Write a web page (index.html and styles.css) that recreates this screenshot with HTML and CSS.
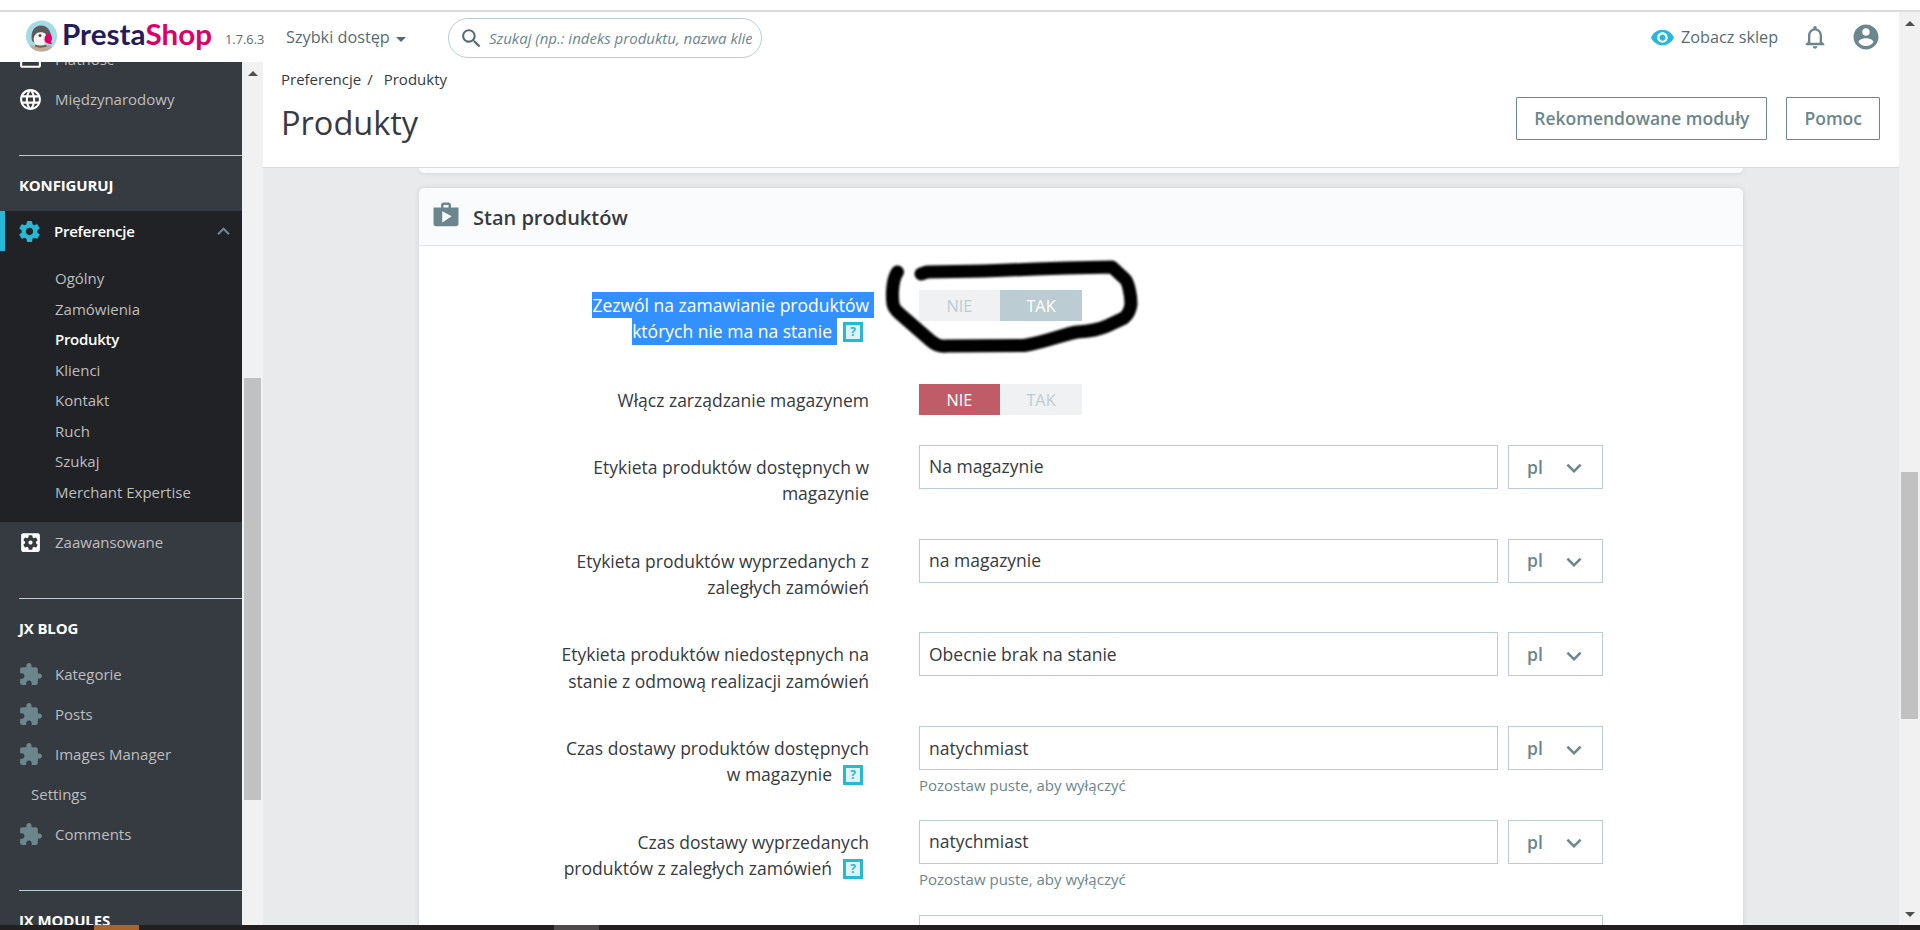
FILE: index.html
```html
<!DOCTYPE html>
<html lang="pl">
<head>
  <meta charset="utf-8">
  <title>Produkty • PrestaShop</title>
  <link rel="stylesheet" href="styles.css">
</head>
<body>
  <!-- Shared icons -->
  <svg class="sprite">
    <symbol id="extension" viewBox="0 0 24 24"><path d="M20.5 11H19V7c0-1.1-.9-2-2-2h-4V3.5C13 2.12 11.88 1 10.5 1S8 2.12 8 3.5V5H4c-1.1 0-1.99.9-1.99 2v3.8H3.5c1.49 0 2.7 1.21 2.7 2.7s-1.21 2.7-2.7 2.7H2V20c0 1.1.9 2 2 2h3.8v-1.5c0-1.49 1.21-2.7 2.7-2.7 1.49 0 2.7 1.21 2.7 2.7V22H17c1.1 0 2-.9 2-2v-4h1.5c1.38 0 2.5-1.12 2.5-2.5S21.88 11 20.5 11z"/></symbol>
    <symbol id="arrow-down" viewBox="0 0 24 24"><path d="M7.41 7.84L12 12.42l4.59-4.58L18 9.25l-6 6-6-6z"/></symbol>
  </svg>

  <div class="top-strip"></div>

  <div class="window">
    <div class="app">
      <header class="header">
        <a class="logo">
          <svg width="192" height="34" viewBox="0 0 192 34">
            <clipPath id="disc"><circle cx="15.500" cy="16" r="15.500"/></clipPath>
            <g clip-path="url(#disc)">
              <rect width="31" height="32" fill="#a4dbe8"/>
              <path d="M6 21C4 12 8 5.500 15 5.500c5 0 8.500 3 9.500 8L23 20 12 25z" fill="#5b5b5e"/>
              <path d="M8 17c1-4 5-5.500 9-4.500 3 .8 4 3 3 6l-2 6.500h-8c-2-2-3-5-2-8z" fill="#f7f3f1"/>
              <path d="M4 25c5 1.500 14 1.500 20-.5l3 4-10 4.500H6z" fill="#c3ab97"/>
              <path d="M9 24.500c3 1.500 8 1.500 11 0l1 2c-4 1.500-9 1.500-12 0z" fill="#6e6461"/>
              <path d="M18.500 19c0-3 3-6.500 5.500-5.500 2.500 2 2.500 6 1 8l1 2.500c-3 0-5-.5-6.500-2-1-.8-1.200-2-1-3z" fill="#df0067"/>
              <circle cx="14" cy="15.500" r="1.500" fill="#4b4b4e"/>
            </g>
            <text class="logo-text" x="36" y="25" textLength="150" lengthAdjust="spacingAndGlyphs"><tspan fill="#251b5b">Presta</tspan><tspan fill="#df0067">Shop</tspan></text>
          </svg>
        </a>
        <span class="version">1.7.6.3</span>
        <span class="quick-access">Szybki dostęp <i class="caret"></i></span>
        <div class="search">
          <svg class="icon" viewBox="0 0 24 24"><path d="M15.5 14h-.79l-.28-.27C15.41 12.59 16 11.11 16 9.5 16 5.91 13.09 3 9.5 3S3 5.91 3 9.5 5.91 16 9.500 16c1.610 0 3.090-.59 4.230-1.570l.27.28v.79l5 4.990L20.490 19l-4.990-5zm-6 0C7.010 14 5 11.990 5 9.500S7.010 5 9.500 5 14 7.010 14 9.500 11.990 14 9.500 14z"/></svg>
          <span class="search-text">Szukaj (np.: indeks produktu, nazwa klienta...)</span>
        </div>
        <div class="header-right">
          <svg class="icon eye" viewBox="0 0 24 24"><path d="M12 4.500C7 4.500 2.730 7.610 1 12c1.730 4.390 6 7.500 11 7.500s9.270-3.110 11-7.500c-1.730-4.390-6-7.500-11-7.500zM12 17c-2.760 0-5-2.240-5-5s2.240-5 5-5 5 2.240 5 5-2.240 5-5 5zm0-8c-1.660 0-3 1.340-3 3s1.340 3 3 3 3-1.340 3-3-1.340-3-3-3z"/></svg>
          <span class="shop-link">Zobacz sklep</span>
          <svg class="icon bell" viewBox="0 0 24 24"><path d="M12 22c1.1 0 2-.9 2-2h-4c0 1.1.9 2 2 2zm6-6v-5c0-3.070-1.630-5.640-4.500-6.320V4c0-.83-.67-1.500-1.500-1.500s-1.500.67-1.500 1.500v.68C7.640 5.360 6 7.920 6 11v5l-2 2v1h16v-1l-2-2zm-2 1H8v-6c0-2.480 1.510-4.500 4-4.500s4 2.020 4 4.500v6z"/></svg>
          <svg class="icon account" viewBox="0 0 24 24"><path d="M12 2C6.480 2 2 6.480 2 12s4.480 10 10 10 10-4.480 10-10S17.520 2 12 2zm0 3c1.660 0 3 1.340 3 3s-1.340 3-3 3-3-1.340-3-3 1.340-3 3-3zm0 14.200c-2.500 0-4.710-1.280-6-3.220.03-1.990 4-3.080 6-3.080 1.990 0 5.970 1.090 6 3.080-1.290 1.940-3.500 3.220-6 3.220z"/></svg>
        </div>
      </header>

      <div class="columns">
        <nav class="sidebar">
          <a class="item first">
            <svg class="icon" viewBox="0 0 24 24"><path d="M20 4H4c-1.110 0-1.990.89-1.990 2L2 18c0 1.110.89 2 2 2h16c1.110 0 2-.89 2-2V6c0-1.110-.89-2-2-2zm0 14H4v-6h16v6zm0-10H4V6h16v2z"/></svg>
            Płatność
          </a>
          <a class="item">
            <svg class="icon" viewBox="0 0 24 24"><path d="M11.990 2C6.470 2 2 6.480 2 12s4.470 10 9.990 10C17.520 22 22 17.520 22 12S17.520 2 11.990 2zm6.930 6h-2.950c-.32-1.250-.78-2.450-1.380-3.560 1.840.63 3.370 1.910 4.330 3.560zM12 4.040c.83 1.200 1.480 2.530 1.910 3.960h-3.820c.43-1.430 1.080-2.760 1.910-3.960zM4.260 14C4.100 13.360 4 12.690 4 12s.1-1.360.26-2h3.380c-.08.66-.14 1.320-.14 2 0 .68.06 1.340.14 2H4.260zm.82 2h2.950c.32 1.250.78 2.450 1.380 3.560-1.840-.63-3.370-1.900-4.330-3.560zm2.950-8H5.080c.96-1.660 2.490-2.930 4.330-3.560C8.810 5.550 8.350 6.750 8.030 8zM12 19.960c-.83-1.200-1.480-2.530-1.910-3.960h3.820c-.43 1.430-1.080 2.760-1.910 3.960zM14.340 14H9.660c-.09-.66-.16-1.320-.16-2 0-.68.07-1.350.16-2h4.680c.09.65.16 1.320.16 2 0 .68-.07 1.340-.16 2zm.25 5.560c.6-1.110 1.060-2.310 1.380-3.560h2.950c-.96 1.650-2.490 2.930-4.330 3.560zM16.360 14c.08-.66.14-1.320.14-2 0-.68-.06-1.340-.14-2h3.380c.16.64.26 1.310.26 2s-.1 1.360-.26 2h-3.380z"/></svg>
            Międzynarodowy
          </a>
          <div class="category">KONFIGURUJ</div>
          <div class="group">
            <a class="item active">
              <svg class="icon" viewBox="0 0 24 24"><path d="M19.430 12.980c.04-.32.07-.64.07-.98s-.03-.66-.07-.98l2.110-1.650c.19-.15.24-.42.12-.64l-2-3.460c-.12-.22-.39-.3-.61-.22l-2.490 1c-.52-.4-1.080-.73-1.690-.98l-.38-2.650C14.460 2.180 14.250 2 14 2h-4c-.25 0-.46.18-.49.42l-.38 2.650c-.61.25-1.170.59-1.690.98l-2.490-1c-.23-.09-.49 0-.61.22l-2 3.460c-.13.22-.07.49.12.64l2.110 1.650c-.04.32-.07.65-.07.98s.03.66.07.98l-2.110 1.650c-.19.15-.24.42-.12.64l2 3.460c.12.22.39.3.61.22l2.490-1c.52.4 1.080.73 1.690.98l.38 2.650c.03.24.24.42.49.42h4c.25 0 .46-.18.49-.42l.38-2.650c.61-.25 1.170-.59 1.690-.98l2.490 1c.23.09.49 0 .61-.22l2-3.460c.12-.22.07-.49-.12-.64l-2.110-1.650zM12 15.500c-1.930 0-3.500-1.570-3.500-3.500s1.570-3.500 3.500-3.500 3.500 1.570 3.500 3.500-1.570 3.500-3.500 3.500z"/></svg>
              Preferencje
              <svg class="icon chevron" viewBox="0 0 24 24"><path d="M7.410 15.410L12 10.830l4.590 4.580L18 14l-6-6-6 6z"/></svg>
            </a>
            <ul class="submenu">
              <li>Ogólny</li>
              <li>Zamówienia</li>
              <li class="current">Produkty</li>
              <li>Klienci</li>
              <li>Kontakt</li>
              <li>Ruch</li>
              <li>Szukaj</li>
              <li>Merchant Expertise</li>
            </ul>
          </div>
          <a class="item">
            <svg class="icon" viewBox="0 0 24 24"><path d="M12 10c-1.1 0-2 .9-2 2s.9 2 2 2 2-.9 2-2-.9-2-2-2zm7-7H5c-1.110 0-2 .9-2 2v14c0 1.100.89 2 2 2h14c1.110 0 2-.9 2-2V5c0-1.100-.89-2-2-2zm-1.750 9c0 .23-.02.46-.05.68l1.480 1.160c.13.11.17.3.08.45l-1.400 2.420c-.09.15-.27.21-.43.15l-1.740-.7c-.36.28-.76.51-1.180.69l-.26 1.850c-.03.17-.18.3-.35.3h-2.800c-.17 0-.32-.13-.35-.29l-.26-1.850c-.43-.18-.82-.41-1.180-.69l-1.740.7c-.16.06-.34 0-.43-.15l-1.400-2.420c-.09-.15-.05-.34.08-.45l1.480-1.160c-.03-.23-.05-.46-.05-.69 0-.23.02-.46.05-.68l-1.480-1.160c-.13-.11-.17-.3-.08-.45l1.400-2.420c.09-.15.27-.21.43-.15l1.740.7c.36-.28.76-.51 1.180-.69l.26-1.850c.03-.17.18-.3.35-.3h2.800c.17 0 .32.13.35.29l.26 1.850c.43.18.82.41 1.180.69l1.740-.7c.16-.06.34 0 .43.15l1.400 2.420c.09.15.05.34-.08.45l-1.480 1.160c.03.23.05.46.05.69z"/></svg>
            Zaawansowane
          </a>
          <div class="category">JX BLOG</div>
          <a class="item"><svg class="icon muted"><use href="#extension"/></svg>Kategorie</a>
          <a class="item"><svg class="icon muted"><use href="#extension"/></svg>Posts</a>
          <a class="item"><svg class="icon muted"><use href="#extension"/></svg>Images Manager</a>
          <a class="item no-icon">Settings</a>
          <a class="item"><svg class="icon muted"><use href="#extension"/></svg>Comments</a>
          <div class="category">JX MODULES</div>
        </nav>
        <div class="scrollbar side-scroll">
          <i class="up"></i>
          <i class="thumb"></i>
        </div>

        <main class="main">
          <div class="page-head">
            <div>
              <div class="breadcrumb"><span>Preferencje</span><span class="slash">/</span><span>Produkty</span></div>
              <h1>Produkty</h1>
            </div>
            <div class="toolbar">
              <a class="btn">Rekomendowane moduły</a>
              <a class="btn">Pomoc</a>
            </div>
          </div>

          <div class="content">
            <div class="card previous"></div>
            <div class="card stock">
              <h3 class="card-title">
                <svg class="icon" viewBox="0 0 24 24"><path d="M16 6V4c0-1.110-.89-2-2-2h-4c-1.110 0-2 .89-2 2v2H2v13c0 1.110.89 2 2 2h16c1.110 0 2-.89 2-2V6h-6zm-6-2h4v2h-4V4zM9 18V9l7.500 4L9 18z"/></svg>
                Stan produktów
              </h3>
              <div class="card-body">
                <div class="form-row highlighted">
                  <div class="label"><span class="selected">Zezwól na zamawianie produktów</span><br><span class="selected">których nie ma na stanie</span><span class="help">?</span></div>
                  <div class="switch"><span>NIE</span><span class="on">TAK</span></div>
                  <svg class="scribble" width="270" height="110" viewBox="0 0 270 110">
                    <path d="M37.500 32C33 38 31.500 52 33 64Q34 69 40 74L71 101Q78 107 86 106L164 105.500C186 102 201 95 217 92Q236 91 247 86L264 78Q270 73 271 64C271 54 268 42 265 39L252 27L206 28L176 29L124 31L67 32L61 34"/>
                  </svg>
                </div>
                <div class="form-row short">
                  <div class="label">Włącz zarządzanie magazynem</div>
                  <div class="switch"><span class="off">NIE</span><span>TAK</span></div>
                </div>
                <div class="form-row">
                  <div class="label">Etykieta produktów dostępnych w magazynie</div>
                  <div class="field"><input type="text" value="Na magazynie"></div>
                  <div class="lang">pl <svg class="icon"><use href="#arrow-down"/></svg></div>
                </div>
                <div class="form-row">
                  <div class="label">Etykieta produktów wyprzedanych z zaległych zamówień</div>
                  <div class="field"><input type="text" value="na magazynie"></div>
                  <div class="lang">pl <svg class="icon"><use href="#arrow-down"/></svg></div>
                </div>
                <div class="form-row">
                  <div class="label">Etykieta produktów niedostępnych na stanie z odmową realizacji zamówień</div>
                  <div class="field"><input type="text" value="Obecnie brak na stanie"></div>
                  <div class="lang">pl <svg class="icon"><use href="#arrow-down"/></svg></div>
                </div>
                <div class="form-row">
                  <div class="label">Czas dostawy produktów dostępnych w&nbsp;magazynie<span class="help">?</span></div>
                  <div class="field"><input type="text" value="natychmiast"><small>Pozostaw puste, aby wyłączyć</small></div>
                  <div class="lang">pl <svg class="icon"><use href="#arrow-down"/></svg></div>
                </div>
                <div class="form-row">
                  <div class="label">Czas dostawy wyprzedanych produktów z zaległych zamówień<span class="help">?</span></div>
                  <div class="field"><input type="text" value="natychmiast"><small>Pozostaw puste, aby wyłączyć</small></div>
                  <div class="lang">pl <svg class="icon"><use href="#arrow-down"/></svg></div>
                </div>
                <div class="form-row last">
                  <div class="label"></div>
                  <div class="field wide"><input type="text"></div>
                </div>
              </div>
            </div>
          </div>
        </main>
      </div>
    </div>
    <div class="scrollbar page-scroll">
      <i class="up"></i>
      <i class="thumb"></i>
      <i class="down"></i>
    </div>
  </div>

  <div class="taskbar"><i class="task orange"></i><i class="task gray"></i></div>
</body>
</html>
```
FILE: styles.css
```css
* {
  box-sizing: border-box;
}

body {
  margin: 0;
  height: 930px;
  display: flex;
  flex-direction: column;
  overflow: hidden;
  background: #fff;
  color: #363a41;
  font-family: "Open Sans", sans-serif;
  font-size: 17.5px;
  line-height: 26.25px;
}

.sprite {
  display: none;
}

.icon {
  width: 25px;
  height: 25px;
  flex: none;
  fill: currentColor;
}

.top-strip {
  height: 12px;
  border-bottom: 2px solid #dadada;
}

.window {
  height: 913px;
  display: flex;
}

.app {
  width: 1899px;
  display: flex;
  flex-direction: column;
}

/* Header */
.header {
  height: 50px;
  flex: none;
  display: flex;
  align-items: center;
  color: #576c72;
}

.logo {
  width: 199px;
  height: 34px;
  margin-left: 26px;
}

.logo-text {
  font-family: Lato, sans-serif;
  font-weight: 700;
  font-size: 28px;
}

.version {
  width: 61px;
  padding-top: 4px;
  font-size: 12.8px;
}

.quick-access {
  width: 162px;
  font-size: 16.25px;
  display: flex;
  align-items: center;
}

.caret {
  margin: 4px 0 0 6px;
  border: 5px solid transparent;
  border-top: 5px solid #576c72;
  border-bottom: 0;
}

.search {
  width: 314px;
  height: 40px;
  margin-top: 2px;
  padding: 0 9px 0 10px;
  display: flex;
  align-items: center;
  border: 1px solid #bbcdd2;
  border-radius: 20px;
}

.search-text {
  margin-left: 5px;
  width: 264px;
  overflow: hidden;
  white-space: nowrap;
  font-size: 15px;
  font-style: italic;
  color: #6c868e;
}

.header-right {
  margin-left: auto;
  padding-right: 18px;
  display: flex;
  align-items: center;
}

.eye {
  color: #25b9d7;
}

.shop-link {
  width: 126px;
  padding-left: 6px;
  font-size: 16.25px;
  white-space: nowrap;
}

.bell {
  width: 28px;
  height: 28px;
  margin-right: 22px;
  color: #6c868e;
}

.account {
  width: 30px;
  height: 30px;
  color: #6c868e;
}

.columns {
  flex: 1;
  min-height: 0;
  display: flex;
}

/* Sidebar */
.sidebar {
  width: 242px;
  overflow: hidden;
  background: #363a41;
  color: #bebebe;
  font-size: 15px;
}

.item {
  height: 40px;
  padding-left: 18px;
  display: flex;
  align-items: center;
}

.item .icon {
  margin-right: 12px;
  color: #fff;
}

.item .icon.muted {
  color: #6c868e;
}

.item.first {
  margin-top: -23px;
}

.item.no-icon {
  padding-left: 31px;
}

.category {
  height: 56px;
  margin: 36px 0 0 19px;
  padding-top: 16px;
  border-top: 1px solid #bbcdd2;
  color: #fff;
  font-weight: 700;
  letter-spacing: -0.15px;
}

.group {
  height: 311px;
  background: #202226;
}

.item.active {
  padding-left: 12px;
  border-left: 5px solid #25b9d7;
  color: #fff;
  font-weight: 600;
  letter-spacing: -0.25px;
}

.item.active .icon {
  color: #25b9d7;
}

.item.active .icon.chevron {
  margin-left: auto;
  margin-right: 6px;
  color: #6c868e;
}

.submenu {
  margin: 0;
  padding: 12px 0 0 55px;
  list-style: none;
  line-height: 30.5px;
}

.submenu .current {
  color: #fff;
  font-weight: 600;
  letter-spacing: -0.3px;
}

/* Scrollbars */
.scrollbar {
  width: 21px;
  flex: none;
  display: flex;
  flex-direction: column;
  align-items: center;
  background: #f1f1f1;
}

.scrollbar .up {
  border: 5px solid transparent;
  border-bottom: 5px solid #505050;
  border-top: 0;
}

.scrollbar .down {
  border: 5px solid transparent;
  border-top: 5px solid #505050;
  border-bottom: 0;
  margin-top: 193px;
}

.scrollbar .thumb {
  width: 17px;
  background: #c1c1c1;
}

.side-scroll .up {
  margin-top: 9px;
}

.side-scroll .thumb {
  height: 422px;
  margin-top: 302px;
}

.page-scroll .up {
  margin-top: 9px;
}

.page-scroll .thumb {
  height: 247px;
  margin-top: 446px;
}

/* Page head */
.main {
  flex: 1;
  display: flex;
  flex-direction: column;
  min-width: 0;
}

.page-head {
  height: 106px;
  flex: none;
  padding: 4px 19px 0;
  display: flex;
  justify-content: space-between;
  background: #fff;
  border-bottom: 1px solid #d6dadc;
}

.breadcrumb {
  margin-left: -1px;
  font-size: 15px;
}

.breadcrumb .slash {
  margin: 0 11px 0 6px;
}

h1 {
  margin: 11px 0 0 -1px;
  font-size: 32.5px;
  line-height: 40px;
  font-weight: 400;
}

.toolbar {
  display: flex;
  gap: 19px;
  padding-top: 31px;
}

.btn {
  height: 43px;
  padding: 0 17px;
  line-height: 41px;
  border: 1px solid #6c868e;
  border-radius: 1px;
  color: #6c868e;
  font-weight: 600;
}

/* Cards */
.content {
  flex: 1;
  overflow: hidden;
  padding-left: 156px;
  background: #e9eaec;
}

.card {
  width: 1324px;
  border-radius: 6px;
  background: #fff;
  box-shadow: 0 0 5px rgba(54, 58, 65, 0.15);
}

.previous {
  height: 5px;
  border-radius: 0 0 6px 6px;
  margin-bottom: 15px;
  background: #fafbfc;
}

.stock {
  height: 760px;
}

.card-title {
  height: 58px;
  margin: 0;
  padding: 3px 0 0 12px;
  display: flex;
  align-items: center;
  border-bottom: 1px solid #dfe4e8;
  border-radius: 6px 6px 0 0;
  background: #fafbfc;
  font-size: 20px;
  font-weight: 600;
}

.card-title .icon {
  width: 30px;
  height: 30px;
  margin: -7px 12px 0 0;
  color: #6c868e;
}

.card-body {
  padding-top: 38px;
}

.form-row {
  position: relative;
  height: 93.75px;
  display: flex;
  align-items: flex-start;
}

.form-row.short {
  height: 67px;
}

.form-row.last {
  padding-top: 1px;
}

.label {
  width: 314px;
  margin: 9px 50px 0 136px;
  text-align: right;
}

.highlighted .label {
  margin-top: 8px;
}

.selected {
  display: inline-block;
  margin-right: -5px;
  padding-right: 5px;
  background: #3390ff;
  color: #fff;
}

.help {
  display: inline-block;
  width: 20px;
  height: 20px;
  margin: -2px 6px -2px 11px;
  border: 3px solid #25b9d7;
  background: #dcf4f9;
  color: #25b9d7;
  font-size: 12px;
  font-weight: 700;
  line-height: 14px;
  text-align: center;
  vertical-align: 2px;
}

/* Switch */
.switch {
  width: 163px;
  height: 31px;
  margin-top: 6px;
  display: flex;
  background: #eff1f3;
  color: #bbcdd2;
  font-size: 16.25px;
  line-height: 32px;
  text-align: center;
}

.switch span {
  width: 81px;
}

.switch span + span {
  width: 82px;
}

.switch .on {
  background: #bbcdd2;
  color: #fff;
}

.switch .off {
  background: #c05c67;
  color: #fff;
}

/* Hand-drawn loop around the first switch */
.scribble {
  position: absolute;
  left: 441px;
  top: -44px;
  overflow: visible;
  fill: none;
  stroke: #000;
  stroke-width: 13px;
  stroke-linecap: round;
  stroke-linejoin: round;
  filter: blur(0.8px);
}

/* Inputs */
.field {
  width: 579px;
  margin-right: 10px;
}

.field.wide {
  width: 684px;
}

.field input {
  display: block;
  width: 100%;
  height: 44px;
  padding: 0 9px 1px;
  border: 1px solid #bbcdd2;
  background: #fff;
  color: #363a41;
  font: inherit;
}

.field small {
  display: block;
  margin-top: 2px;
  font-size: 15px;
  color: #6c868e;
}

.lang {
  width: 95px;
  height: 44px;
  padding: 0 13px 0 18px;
  display: flex;
  align-items: center;
  justify-content: space-between;
  border: 1px solid #bbcdd2;
  color: #6c868e;
  font-weight: 600;
}

.lang .icon {
  width: 30px;
  height: 30px;
  margin-top: 5px;
}

/* Taskbar */
.taskbar {
  height: 5px;
  display: flex;
  background: #231f20;
}

.task.orange {
  width: 45px;
  margin-left: 94px;
  background: #a9642c;
}

.task.gray {
  width: 45px;
  margin-left: 415px;
  background: #4e4a4b;
}
```
